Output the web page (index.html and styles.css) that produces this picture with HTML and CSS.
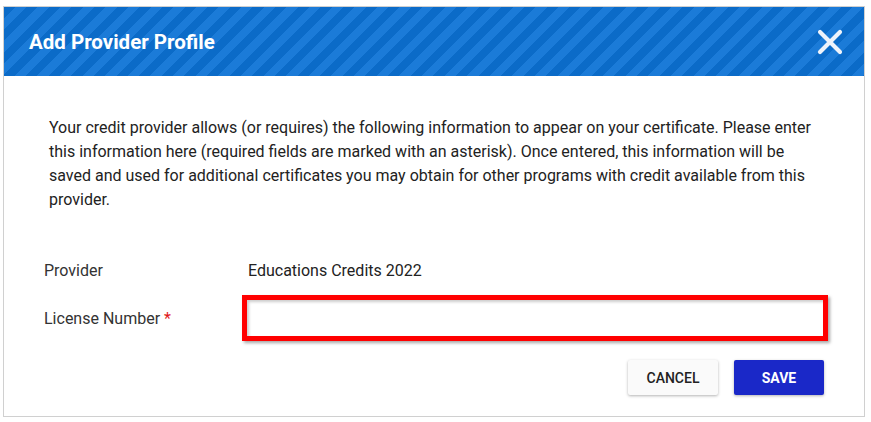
FILE: index.html
```html
<!DOCTYPE html>
<html lang="en">
<head>
<meta charset="utf-8">
<title>Add Provider Profile</title>
<link rel="stylesheet" href="styles.css">
</head>
<body>
<div class="dialog">
  <div class="header">
    <h1 class="title">Add Provider Profile</h1>
    <button class="close" aria-label="Close">
      <svg width="26" height="26" viewBox="0 0 26 26"><path d="M3 3 L23 23 M23 3 L3 23" stroke="#eef3fb" stroke-width="4.2" stroke-linecap="round" fill="none"/></svg>
    </button>
  </div>
  <div class="body">
    <p class="intro">Your credit provider allows (or requires) the following information to appear on your certificate. Please enter this information here (required fields are marked with an asterisk). Once entered, this information will be saved and used for additional certificates you may obtain for other programs with credit available from this provider.</p>
    <div class="form">
      <div class="label">Provider</div>
      <div class="value">Educations Credits 2022</div>
      <div class="label">License Number <span class="req">*</span></div>
      <div class="field"><input class="input" type="text"></div>
    </div>
    <div class="actions">
      <button class="btn cancel">CANCEL</button>
      <button class="btn save">SAVE</button>
    </div>
  </div>
</div>
</body>
</html>
```
FILE: styles.css
```css
html, body {
  margin: 0;
  padding: 0;
  background: #fff;
  font-family: Roboto, "Liberation Sans", Arial, sans-serif;
}
.dialog {
  margin: 6px 0 0 3px;
  width: 860px;
  height: 409px;
  border: 1px solid #d0d0d0;
  box-sizing: content-box;
  display: flex;
  flex-direction: column;
}
.header {
  height: 69px;
  display: flex;
  align-items: center;
  justify-content: space-between;
  padding: 0 21px 0 25px;
  background: repeating-linear-gradient(135deg, #0b6bc8 0 8px, #1b7bd8 8px 16px);
}
.title {
  margin: 0;
  color: #fff;
  font-size: 20.5px;
  font-weight: 700;
  letter-spacing: 0;
}
.close {
  background: none;
  border: 0;
  padding: 0;
  width: 26px;
  height: 26px;
  display: flex;
  cursor: pointer;
}
.body {
  flex: 1;
  padding: 40px 0 0 0;
  display: flex;
  flex-direction: column;
}
.intro {
  margin: 0 0 0 45px;
  width: 775px;
  font-size: 16px;
  line-height: 24px;
  color: #222;
}
.form {
  margin: 45px 0 0 40px;
  display: grid;
  grid-template-columns: 198px 586px;
  grid-template-rows: 26px 46px;
  row-gap: 12px;
  align-items: center;
  font-size: 16px;
  color: #222;
}
.label {
  color: #333;
}
.value {
  padding-left: 6px;
}
.req {
  color: #e01a1a;
}
.field {
  height: 46px;
}
.input {
  box-sizing: border-box;
  width: 586px;
  height: 46px;
  border: 5px solid #ff0000;
  background: #fff;
  box-shadow: 2px 2px 3px rgba(0,0,0,0.35), inset 2px 2px 3px rgba(0,0,0,0.2);
  outline: none;
  margin: 0;
  padding: 0 8px;
}
.actions {
  margin-top: 19px;
  display: flex;
  justify-content: flex-end;
  gap: 16px;
  padding-right: 40px;
}
.btn {
  width: 90px;
  height: 35px;
  border: 0;
  border-radius: 2px;
  font-family: Roboto, "Liberation Sans", Arial, sans-serif;
  font-size: 14px;
  font-weight: 500;
  cursor: pointer;
  box-shadow: 0 1px 3px rgba(0,0,0,0.3);
}
.cancel {
  background: #fafafa;
  color: #222;
}
.save {
  background: #1a28c8;
  color: #fff;
  font-weight: 700;
}
```
